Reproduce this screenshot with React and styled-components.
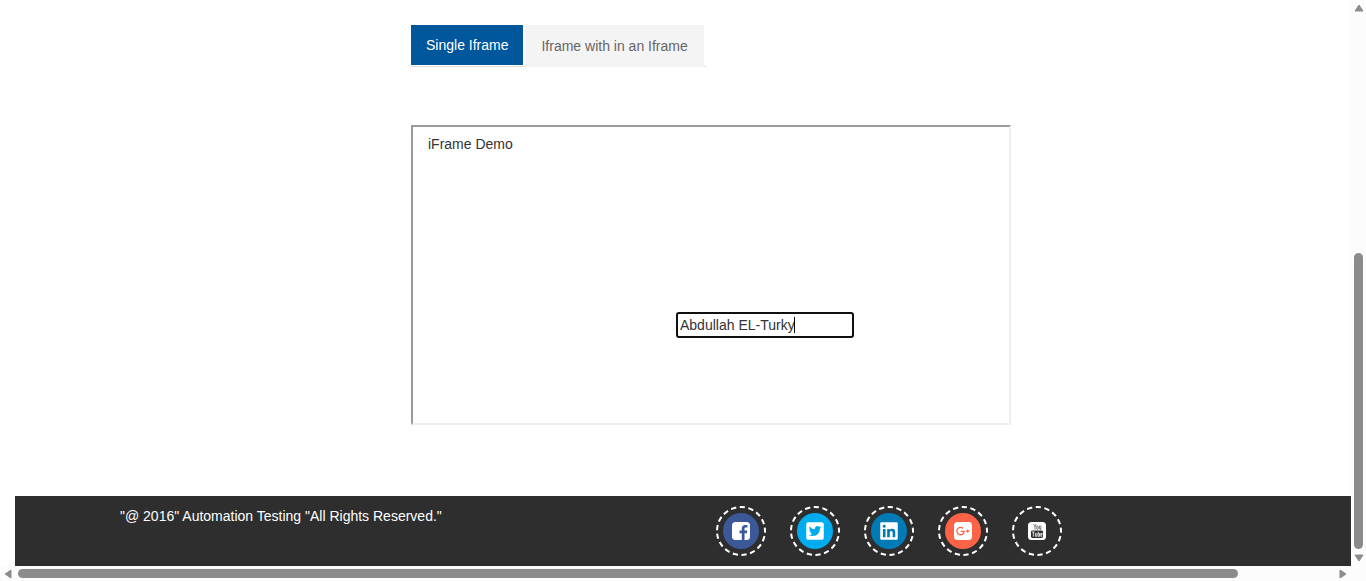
import React from 'react';
import styled, { createGlobalStyle } from 'styled-components';
import { FaTwitterSquare, FaLinkedin } from 'react-icons/fa';

const GlobalStyle = createGlobalStyle`
  *, *::before, *::after { box-sizing: border-box; }
  body {
    margin: 0;
    background: #fff;
    color: #333;
    font: 14px/20px "Liberation Sans", Arial, sans-serif;
  }
`;

const Shell = styled.div`
  display: grid;
  grid-template-columns: minmax(0, 1fr) 15px;
  grid-template-rows: minmax(0, 1fr) 15px;
  min-height: 100vh;
`;

const Page = styled.div`
  display: flex;
  flex-direction: column;
  padding-left: 15px;
`;

const Main = styled.main`
  flex: 1;
  padding: 25px 0 71px 396px;
`;

const Tabs = styled.nav`
  display: flex;
  align-items: flex-start;
  gap: 2px;
  width: fit-content;
  height: 42px;
  padding-right: 2px;
  box-shadow: inset 0 -1px #ddd;
`;

const Tab = styled.a`
  height: ${(p) => (p.$active ? 40 : 42)}px;
  padding: 0 ${(p) => (p.$active ? 15 : 16)}px;
  line-height: ${(p) => (p.$active ? 40 : 42)}px;
  background: ${(p) => (p.$active ? '#00579c' : '#f4f4f4')};
  color: ${(p) => (p.$active ? '#fff' : '#666')};
  text-decoration: none;
`;

const Frame = styled.section`
  width: 600px;
  max-width: 100%;
  min-height: 300px;
  margin-top: 58px;
  padding: 7px 155px 85px 15px;
  display: flex;
  flex-direction: column;
  justify-content: space-between;
  border: 2px solid;
  border-color: #9a9a9a #eee #eee #9a9a9a;
`;

const FrameTitle = styled.label`
  align-self: flex-start;
`;

const Field = styled.div`
  position: relative;
  align-self: flex-end;
  width: 178px;
`;

const TextInput = styled.input`
  display: block;
  width: 100%;
  height: 26px;
  padding: 0 2px;
  border: 2px solid #101010;
  border-radius: 3px;
  outline: 0;
  background: #fff;
  color: #333;
  font: inherit;
  caret-color: transparent;
`;

const Caret = styled.span`
  position: absolute;
  top: 5px;
  left: 118px;
  width: 1px;
  height: 16px;
  background: #000;
`;

const Footer = styled.footer`
  display: flex;
  height: 70px;
  padding: 10px 0 0 105px;
  background: #2e2e2e;
  color: #fff;
`;

const Copyright = styled.p`
  width: 596px;
  margin: 0;
`;

const Socials = styled.div`
  display: flex;
  gap: 24px;
`;

const SocialLink = styled.a`
  display: grid;
  place-items: center;
  width: 50px;
  height: 50px;
  > * { grid-area: 1 / 1; }
`;

const Disc = styled.span`
  display: flex;
  align-items: center;
  justify-content: center;
  width: 36px;
  height: 36px;
  border-radius: 50%;
  background: ${(p) => p.$color};
  color: #fff;
`;

const Track = styled.div`
  display: flex;
  flex-direction: ${(p) => (p.$vertical ? 'column' : 'row')};
  align-items: center;
  gap: ${(p) => (p.$vertical ? 5 : 6)}px;
  padding: ${(p) => (p.$vertical ? '4px 0' : '0 4px')};
  background: #fcfcfc;
`;

const Space = styled.div`
  flex: ${(p) => p.$grow};
`;

const Thumb = styled.div`
  flex: ${(p) => p.$grow};
  width: ${(p) => (p.$vertical ? '9px' : 'auto')};
  height: ${(p) => (p.$vertical ? 'auto' : '9px')};
  border-radius: 5px;
  background: #8b8b8b;
`;

const Corner = styled.div`
  background: #fcfcfc;
`;

const arrows = {
  up: { w: 10, h: 8, d: 'M5 1 9 7H1Z' },
  down: { w: 10, h: 8, d: 'M5 7 9 1H1Z' },
  left: { w: 8, h: 10, d: 'M1 5 7 1V9Z' },
  right: { w: 8, h: 10, d: 'M7 5 1 1V9Z' },
};

function Arrow({ dir }) {
  const a = arrows[dir];
  return (
    <svg width={a.w} height={a.h} viewBox={`0 0 ${a.w} ${a.h}`} aria-hidden="true">
      <path d={a.d} fill="#8b8b8b" stroke="#8b8b8b" strokeLinejoin="round" />
    </svg>
  );
}

function DashedRing() {
  return (
    <svg width="50" height="50" viewBox="0 0 50 50" aria-hidden="true">
      <circle cx="25" cy="25" r="24" fill="none" stroke="#fff" strokeWidth="2" pathLength="170" strokeDasharray="6 4" strokeDashoffset="4" />
    </svg>
  );
}

function Facebook() {
  return (
    <svg width="18" height="18" viewBox="0 0 18 18" aria-hidden="true">
      <rect width="18" height="18" rx="3.5" fill="#fff" />
      <path d="M9.8 18V11.2H7.5V8.6H9.8V6.6C9.8 4.3 11.2 3 13.3 3C14.3 3 15.2 3.1 15.4 3.1V5.5H14C12.9 5.5 12.5 6 12.5 6.9V8.6H15.3L14.9 11.2H12.5V18Z" fill="#3b5998" />
    </svg>
  );
}

function GooglePlus() {
  return (
    <svg width="18" height="18" viewBox="0 0 18 18" aria-hidden="true">
      <rect width="18" height="18" rx="3.5" fill="#fff" />
      <path d="M9.1 6.4A3.7 3.7 0 1 0 10.2 9.3H6.6" fill="none" stroke="#ff6347" strokeWidth="1.3" />
      <path d="M13.7 7.4V10.8M12 9.1H15.4" stroke="#ff6347" strokeWidth="1.1" />
    </svg>
  );
}

function YouTube() {
  return (
    <svg width="18" height="18" viewBox="0 0 18 18" aria-hidden="true">
      <rect width="18" height="18" rx="3.5" fill="#fff" />
      <path d="M5.5 2 7 4.5V7.5M8.4 2 7 4.5" fill="none" stroke="#2e2e2e" strokeWidth=".6" />
      <rect x="8.7" y="4" width="1.5" height="3.4" rx=".7" fill="none" stroke="#2e2e2e" strokeWidth=".6" />
      <path d="M11.5 3.6V6.8Q11.6 7.6 12.9 6.8M12.9 3.6V7.6" fill="none" stroke="#2e2e2e" strokeWidth=".6" />
      <rect x="3" y="8.4" width="12" height="7.6" rx="1.4" fill="#2e2e2e" />
      <path d="M4 10H6.6M5.3 10V14.7M7.4 11V14.3H8.9V11M10.2 9.6V14.4H11.5V11.4H10.2M14.2 14.3H12.8V11.4H14.1V12.8H12.8" fill="none" stroke="#fff" strokeWidth=".8" />
    </svg>
  );
}

const socials = [
  { name: 'Facebook', color: '#3b5998', icon: <Facebook /> },
  { name: 'Twitter', color: '#00aced', icon: <FaTwitterSquare size={20} /> },
  { name: 'LinkedIn', color: '#007bb6', icon: <FaLinkedin size={20} /> },
  { name: 'Google Plus', color: '#ff6347', icon: <GooglePlus /> },
  { name: 'YouTube', color: 'transparent', icon: <YouTube /> },
];

export default function App() {
  return (
    <Shell>
      <GlobalStyle />
      <Page>
        <Main>
          <Tabs>
            <Tab href="#Single" $active>Single Iframe</Tab>
            <Tab href="#Multiple">Iframe with in an Iframe</Tab>
          </Tabs>
          <Frame>
            <FrameTitle htmlFor="demo">iFrame Demo</FrameTitle>
            <Field>
              <TextInput id="demo" type="text" defaultValue="Abdullah EL-Turky" />
              <Caret />
            </Field>
          </Frame>
        </Main>
        <Footer>
          <Copyright>"@ 2016" Automation Testing "All Rights Reserved."</Copyright>
          <Socials>
            {socials.map((s) => (
              <SocialLink key={s.name} href={`#${s.name}`} aria-label={s.name}>
                <DashedRing />
                <Disc $color={s.color}>{s.icon}</Disc>
              </SocialLink>
            ))}
          </Socials>
        </Footer>
      </Page>
      <Track $vertical>
        <Arrow dir="up" />
        <Space $grow={231} />
        <Thumb $vertical $grow={296} />
        <Arrow dir="down" />
      </Track>
      <Track>
        <Arrow dir="left" />
        <Thumb $grow={1220} />
        <Space $grow={89} />
        <Arrow dir="right" />
      </Track>
      <Corner />
    </Shell>
  );
}
